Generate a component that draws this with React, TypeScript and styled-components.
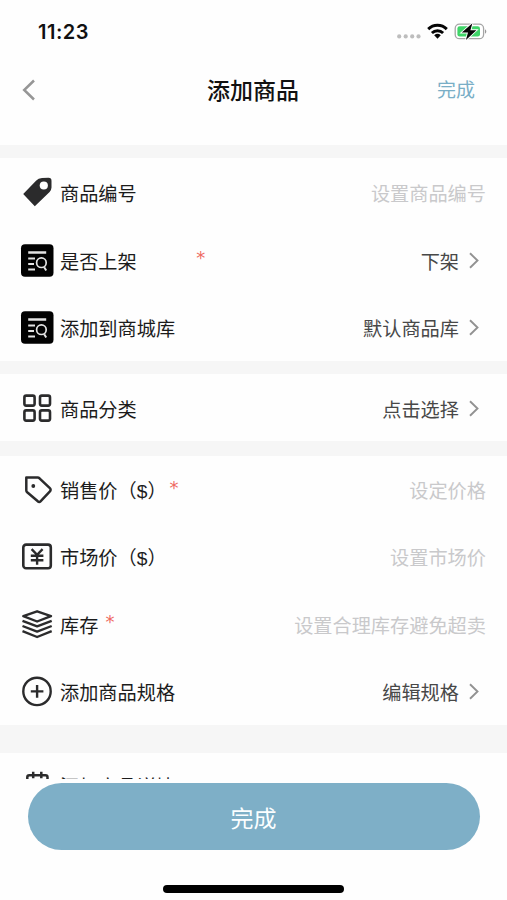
import React from "react";
import styled, { createGlobalStyle } from "styled-components";

const GlobalStyle = createGlobalStyle`
  * { box-sizing: border-box; }
  body { margin: 0; background: #fefefe; }
`;

const Screen = styled.div`
  display: flex;
  flex-direction: column;
  width: 507px;
  height: 900px;
  overflow: hidden;
  background: #fefefe;
  color: #1c1c1c;
  font-family: "Noto Sans CJK SC", sans-serif;
  font-size: 19.2px;
`;

const StatusBar = styled.header`
  display: flex;
  align-items: center;
  justify-content: space-between;
  flex: none;
  height: 62px;
  padding: 0 19px 0 38px;
`;

const Clock = styled.span`
  padding-top: 1px;
  font: 600 20px/24px Inter, sans-serif;
  letter-spacing: 0.5px;
  color: #111;
`;

const StatusIcons = styled.svg`
  display: block;
`;

const NavBar = styled.nav`
  display: grid;
  grid-template-columns: 1fr auto 1fr;
  align-items: center;
  flex: none;
  height: 83px;
  padding: 0 22px 28px 22px;
`;

const BackButton = styled.button`
  display: flex;
  padding: 0;
  border: 0;
  background: none;
`;

const Title = styled.h1`
  margin: 0 1px 2px 0;
  font-size: 23px;
  font-weight: 500;
  line-height: 30px;
  color: #111;
`;

const DoneLink = styled.button`
  justify-self: end;
  margin: 0 10px 2px 0;
  padding: 0;
  border: 0;
  background: none;
  color: #79aec6;
  font: inherit;
  font-size: 19px;
  line-height: 28px;
`;

const Form = styled.main`
  flex: none;
  height: 634px;
  overflow: hidden;
`;

const Gap = styled.div<{ $height: number }>`
  height: ${(p) => p.$height}px;
  background: #f6f6f6;
`;

const Section = styled.section<{ $rowHeight: number; $inset: number }>`
  display: grid;
  grid-auto-rows: ${(p) => p.$rowHeight}px;
  padding-top: ${(p) => p.$inset}px;
`;

const Row = styled.div`
  display: flex;
  align-items: center;
  padding: 1px 21px 0 20px;
  line-height: 28px;
`;

const RowIcon = styled.svg`
  flex: none;
  width: 34px;
  height: 34px;
  margin-right: 6px;
`;

const Label = styled.span`
  white-space: nowrap;
`;

const Currency = styled.span`
  font-family: "Liberation Sans", sans-serif;
  line-height: 1;
`;

const Required = styled.span<{ $offset: number }>`
  margin-left: ${(p) => p.$offset}px;
  padding-bottom: 5px;
  color: #ee6a62;
  font-family: "DejaVu Sans", sans-serif;
  font-size: 18px;
`;

const Value = styled.span`
  margin-left: auto;
  margin-right: 10px;
  color: #484848;
`;

const Placeholder = styled.span`
  margin-left: auto;
  color: #c9c9cb;
`;

const Chevron = styled.svg`
  flex: none;
  margin-right: 7px;
`;

const Footer = styled.footer`
  display: flex;
  flex-direction: column;
  align-items: center;
  flex: 1;
  padding-top: 4px;
`;

const SubmitButton = styled.button`
  width: 452px;
  height: 67px;
  padding: 0;
  border: 0;
  border-radius: 34px;
  background: #7eafc7;
  color: #fbfeff;
  font: inherit;
  font-size: 23px;
`;

const HomeIndicator = styled.div`
  width: 181px;
  height: 8px;
  margin-top: 35px;
  border-radius: 4px;
  background: #000;
`;

const INK = "#2b2b2c";

const icons = {
  tagSolid: (
    <>
      <path d="M3.2 18 16.3 4.4Q18.3 2.3 22 2L28.5 1.8Q31.6 1.8 31.5 4.9V11.5Q31.4 14.1 29.6 16L14.8 30.2Z" fill={INK} />
      <circle cx="23.8" cy="9.5" r="4.1" fill="#fefefe" />
    </>
  ),
  search: (
    <>
      <rect x="1" y="0.2" width="32.5" height="32.5" rx="4" fill="#020202" />
      <g fill="none" stroke="#e4e4e4" strokeWidth="2">
        <path d="M8.2 8.5H26.2" strokeWidth="2.5" />
        <path d="M8.2 14.5H15M8.2 20H14M8.2 25.4H15" />
        <circle cx="21.4" cy="18.7" r="4.8" strokeWidth="1.7" />
        <path d="M24.2 23.2 26.2 26.5" />
      </g>
    </>
  ),
  grid: (
    <g fill="none" stroke={INK} strokeWidth="2.6">
      <rect x="4.4" y="3.6" width="10.2" height="10" rx="1.8" />
      <rect x="20" y="3.6" width="10" height="10" rx="1.8" />
      <rect x="4.4" y="18.4" width="10.2" height="10.2" rx="1.8" />
      <rect x="20" y="18.4" width="10" height="10.2" rx="1.8" />
    </g>
  ),
  tag: (
    <>
      <path d="M6.3 4.6H17.7Q18.7 4.6 19.5 5.3L29.6 14.9Q31.6 16.8 29.7 18.7L20.5 28.3Q19.2 29.7 17.8 28.3L7.2 19.3Q6.3 18.5 6.3 17.2Z" fill="none" stroke={INK} strokeWidth="2.5" strokeLinejoin="round" />
      <circle cx="13.3" cy="13" r="1.9" fill={INK} />
    </>
  ),
  yen: (
    <g fill="none" stroke={INK} strokeWidth="2.6">
      <rect x="3.3" y="4.6" width="27.5" height="23.6" rx="2.8" />
      <path d="M11.6 9.2 17.1 14.8 22.6 9.2M17.1 14.8V24.7M10.8 15.8H23.4M10.8 20.3H23.4" strokeWidth="2.4" />
    </g>
  ),
  layers: (
    <g fill="none" stroke={INK} strokeWidth="2.4" strokeLinejoin="round">
      <path d="M3.3 8.2 17.1 3.3 31 8.2 17.1 13.5Z" />
      <path d="M2.5 12.8 17.1 18.4 31.7 12.8M2.5 18 17.1 23.6 31.7 18M2.5 23.2 17.1 29 31.7 23.2" />
    </g>
  ),
  plus: (
    <g fill="none" stroke={INK} strokeWidth="2.4">
      <circle cx="17" cy="16.4" r="13.7" />
      <path d="M10.8 16.4H23.4M17.1 10.1V22.7" />
    </g>
  ),
  calendar: (
    <g fill="none" stroke={INK} strokeWidth="2.5">
      <rect x="7.3" y="6.2" width="20.2" height="22" rx="2" />
      <path d="M13.2 2.8V9.2M21.3 2.8V9.2" />
    </g>
  ),
};

type Item = {
  icon: keyof typeof icons;
  label: string;
  currency?: string;
  required?: number;
  value?: string;
  placeholder?: string;
};

const basics: Item[] = [
  { icon: "tagSolid", label: "商品编号", placeholder: "设置商品编号" },
  { icon: "search", label: "是否上架", required: 59.5, value: "下架" },
  { icon: "search", label: "添加到商城库", value: "默认商品库" },
];
const category: Item[] = [{ icon: "grid", label: "商品分类", value: "点击选择" }];
const pricing: Item[] = [
  { icon: "tag", label: "销售价", currency: "$", required: 3, placeholder: "设定价格" },
  { icon: "yen", label: "市场价", currency: "$", placeholder: "设置市场价" },
  { icon: "layers", label: "库存", required: 7, placeholder: "设置合理库存避免超卖" },
  { icon: "plus", label: "添加商品规格", value: "编辑规格" },
];
const details: Item[] = [{ icon: "calendar", label: "添加商品详情" }];

function Rows({ items, rowHeight, inset = 0 }: { items: Item[]; rowHeight: number; inset?: number }) {
  return (
    <Section $rowHeight={rowHeight} $inset={inset}>
      {items.map((item) => (
        <Row key={item.label}>
          <RowIcon viewBox="0 0 34 34">{icons[item.icon]}</RowIcon>
          <Label>
            {item.label}
            {item.currency && (
              <>
                （<Currency>{item.currency}</Currency>）
              </>
            )}
          </Label>
          {item.required !== undefined && <Required $offset={item.required}>*</Required>}
          {item.placeholder && <Placeholder>{item.placeholder}</Placeholder>}
          {item.value && (
            <>
              <Value>{item.value}</Value>
              <Chevron width="10" height="18" viewBox="0 0 10 18">
                <path d="M1 1.3 8.5 8.5 1 15.7" fill="none" stroke="#929292" strokeWidth="1.9" />
              </Chevron>
            </>
          )}
        </Row>
      ))}
    </Section>
  );
}

export default function App() {
  return (
    <Screen>
      <GlobalStyle />
      <StatusBar>
        <Clock>11:23</Clock>
        <StatusIcons width="92" height="20" viewBox="0 0 92 20">
          <g fill="#bdbdbd">
            <circle cx="3.2" cy="15.4" r="2.1" />
            <circle cx="9.7" cy="15.4" r="2.1" />
            <circle cx="16.2" cy="15.4" r="2.1" />
            <circle cx="22.5" cy="15.4" r="2.1" />
          </g>
          <g fill="none" stroke="#050505" strokeWidth="2.9">
            <path d="M32.2 8.1A13.2 13.2 0 0 1 50.8 8.1" />
            <path d="M35.9 12A8 8 0 0 1 47.1 12" />
          </g>
          <path d="M38.2 14.2Q41.5 11.4 44.8 14.2L41.5 17.8Z" fill="#050505" />
          <rect x="59.2" y="3.1" width="28.4" height="14.6" rx="4.3" fill="#fff" stroke="#a5a5a5" strokeWidth="1.3" />
          <rect x="61.4" y="5.3" width="22.6" height="10.3" rx="2.3" fill="#3fd568" />
          <path d="M89 8.2Q91.6 10.4 89 12.8Z" fill="#999" />
          <path d="M76.4 2.2 65.8 11.6H72L69.9 19 80.4 9.2H74.4Z" fill="#050505" stroke="#fff" strokeWidth="1.8" paintOrder="stroke" />
        </StatusIcons>
      </StatusBar>
      <NavBar>
        <BackButton aria-label="返回">
          <svg width="14" height="22" viewBox="0 0 14 22">
            <path d="M12 1.5 2.2 11 12 20.5" fill="none" stroke="#969696" strokeWidth="2.5" />
          </svg>
        </BackButton>
        <Title>添加商品</Title>
        <DoneLink>完成</DoneLink>
      </NavBar>
      <Form>
        <Gap $height={13} />
        <Rows items={basics} rowHeight={67.3} inset={1.1} />
        <Gap $height={13.5} />
        <Rows items={category} rowHeight={66} inset={1} />
        <Gap $height={14.5} />
        <Rows items={pricing} rowHeight={67.25} />
        <Gap $height={28} />
        <Rows items={details} rowHeight={66} />
      </Form>
      <Footer>
        <SubmitButton>完成</SubmitButton>
        <HomeIndicator />
      </Footer>
    </Screen>
  );
}
